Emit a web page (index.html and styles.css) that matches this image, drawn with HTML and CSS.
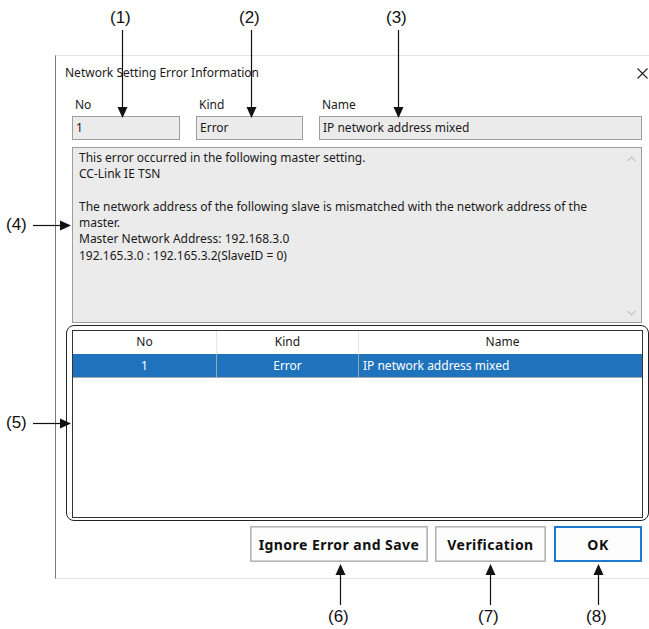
FILE: index.html
```html
<!DOCTYPE html>
<html>
<head>
<meta charset="utf-8">
<link rel="stylesheet" href="styles.css">
</head>
<body>
<div class="page">
  <div class="dialog">
    <div class="title-row">
      <span class="title">Network Setting Error Information</span>
      <svg class="close" width="11" height="11" viewBox="0 0 11 11"><path d="M0.5 0.5L10.5 10.5M10.5 0.5L0.5 10.5" stroke="#222" stroke-width="1.1" fill="none"/></svg>
    </div>
    <div class="fields">
      <div class="field">
        <div class="label">No</div>
        <div class="box">1</div>
      </div>
      <div class="field">
        <div class="label">Kind</div>
        <div class="box">Error</div>
      </div>
      <div class="field">
        <div class="label">Name</div>
        <div class="box">IP network address mixed</div>
      </div>
    </div>
    <div class="detail">
      <div class="detail-text">
        <div>This error occurred in the following master setting.</div>
        <div>CC-Link IE TSN</div>
        <div class="blank"></div>
        <div>The network address of the following slave is mismatched with the network address of the master.</div>
        <div>Master Network Address: 192.168.3.0</div>
        <div>192.165.3.0 : 192.165.3.2(SlaveID = 0)</div>
      </div>
      <div class="scrollbar">
        <svg width="9" height="6" viewBox="0 0 9 6"><path d="M0.5 5L4.5 1L8.5 5" stroke="#c4c4c4" stroke-width="1.2" fill="none"/></svg>
        <svg width="9" height="6" viewBox="0 0 9 6"><path d="M0.5 1L4.5 5L8.5 1" stroke="#c4c4c4" stroke-width="1.2" fill="none"/></svg>
      </div>
    </div>
    <div class="list-frame">
      <div class="list">
        <div class="row head">
          <div class="c1">No</div>
          <div class="c2">Kind</div>
          <div class="c3 center">Name</div>
        </div>
        <div class="row sel">
          <div class="c1">1</div>
          <div class="c2">Error</div>
          <div class="c3">IP network address mixed</div>
        </div>
      </div>
    </div>
    <div class="buttons">
      <div class="btn wide">Ignore Error and Save</div>
      <div class="btn mid">Verification</div>
      <div class="btn ok">OK</div>
    </div>
  </div>

  <svg class="arrows" width="649" height="629" viewBox="0 0 649 629">
    <g stroke="#111" stroke-width="1.2" fill="none">
      <line x1="122.5" y1="30" x2="122.5" y2="108"/>
      <line x1="251.5" y1="30" x2="251.5" y2="108"/>
      <line x1="398.5" y1="30" x2="398.5" y2="108"/>
      <line x1="33" y1="225.5" x2="62" y2="225.5"/>
      <line x1="33" y1="423.5" x2="62" y2="423.5"/>
      <line x1="340.5" y1="572" x2="340.5" y2="605"/>
      <line x1="490.5" y1="572" x2="490.5" y2="605"/>
      <line x1="598.5" y1="572" x2="598.5" y2="605"/>
    </g>
    <g fill="#111">
      <path d="M117.5 107H127.5L122.5 118Z"/>
      <path d="M246.5 107H256.5L251.5 118Z"/>
      <path d="M393.5 107H403.5L398.5 118Z"/>
      <path d="M60 220.5V230.5L71 225.5Z"/>
      <path d="M60 418.5V428.5L71 423.5Z"/>
      <path d="M335.5 575H345.5L340.5 564Z"/>
      <path d="M485.5 575H495.5L490.5 564Z"/>
      <path d="M593.5 575H603.5L598.5 564Z"/>
    </g>
  </svg>
  <div class="callout c-1">(1)</div>
  <div class="callout c-2">(2)</div>
  <div class="callout c-3">(3)</div>
  <div class="callout c-4">(4)</div>
  <div class="callout c-5">(5)</div>
  <div class="callout c-6">(6)</div>
  <div class="callout c-7">(7)</div>
  <div class="callout c-8">(8)</div>
</div>
</body>
</html>
```
FILE: styles.css
```css
html, body {
  margin: 0;
  padding: 0;
  background: #ffffff;
}
.page {
  position: relative;
  width: 649px;
  height: 629px;
  overflow: hidden;
  padding-top: 55px;
  box-sizing: border-box;
}
.dialog {
  margin-left: 55px;
  width: 600px;
  height: 524px;
  box-sizing: border-box;
  border-left: 1px solid #7a7a7a;
  border-top: 1px solid #e3e3e3;
  border-bottom: 1px solid #e3e3e3;
  padding: 0 0 0 16px;
  font-family: "Noto Sans", sans-serif;
  font-size: 12px;
  color: #1a1a1a;
  display: flex;
  flex-direction: column;
}
.title-row {
  height: 33px;
  display: flex;
  align-items: center;
  margin-left: -7px;
  width: 584px;
  justify-content: space-between;
  padding-top: 1px;
  box-sizing: border-box;
}
.title {
  line-height: 16px;
}
.close {
  margin-right: 1px;
}
.fields {
  display: grid;
  grid-template-columns: 108px 107px 323px;
  column-gap: 16px;
}
.label {
  height: 27px;
  line-height: 16px;
  padding: 8px 0 0 3px;
  box-sizing: border-box;
}
.box {
  height: 24px;
  box-sizing: border-box;
  border: 1px solid #9d9d9d;
  background: #ebebeb;
  line-height: 22px;
  padding-left: 3px;
}
.detail {
  margin-top: 7px;
  width: 570px;
  height: 176px;
  box-sizing: border-box;
  border: 1px solid #9d9d9d;
  background: #ebebeb;
  display: flex;
}
.detail-text {
  flex: 1;
  padding: 2px 0 0 6px;
  line-height: 16.3px;
  padding-right: 30px;
}
.blank {
  height: 16.3px;
}
.scrollbar {
  width: 20px;
  display: flex;
  flex-direction: column;
  justify-content: space-between;
  align-items: center;
  padding: 8px 0 6px;
}
.list-frame {
  margin-top: 2px;
  margin-left: -6px;
  width: 583px;
  height: 196px;
  box-sizing: border-box;
  border: 1px solid #222;
  border-radius: 8px;
  padding: 4px 5px 2px 5px;
}
.list {
  height: 100%;
  box-sizing: border-box;
  border: 1.5px solid #333;
  background: #fff;
}
.row {
  display: grid;
  grid-template-columns: 144px 142px 1fr;
}
.row > div {
  text-align: center;
}
.row .c3 {
  text-align: left;
  padding-left: 4px;
}
.row .c3.center {
  text-align: center;
}
.head {
  height: 23px;
  line-height: 22px;
}
.head > div {
  border-right: 1px solid #e5e5e5;
}
.head > div:last-child {
  border-right: none;
}
.sel {
  height: 24px;
  line-height: 23px;
  background: #1f72bc;
  color: #ffffff;
  border-bottom: 1px solid #a8a8a8;
  box-sizing: border-box;
}
.sel > div {
  border-right: 1px solid #9aa4ad;
}
.sel > div:last-child {
  border-right: none;
}
.buttons {
  display: flex;
  justify-content: flex-end;
  gap: 7px;
  width: 570px;
  margin-top: 5px;
}
.btn {
  height: 36px;
  box-sizing: border-box;
  border: 2px solid #cfcfcf;
  outline: 1px solid #b5b5b5;
  outline-offset: -1px;
  background: #fdfdfd;
  font-weight: bold;
  font-size: 14px;
  letter-spacing: 0.45px;
  display: flex;
  align-items: center;
  justify-content: center;
  color: #111;
}
.btn.wide { width: 178px; }
.btn.mid { width: 111px; margin-right: 1px; }
.btn.ok {
  width: 88px;
  border: 2px solid #1f78d1;
  outline: none;
}
.arrows {
  position: absolute;
  left: 0;
  top: 0;
}
.callout {
  position: absolute;
  font-family: "Liberation Sans", Arial, sans-serif;
  font-size: 17px;
  line-height: 20px;
  color: #111;
}
.c-1 { left: 110px; top: 8px; }
.c-2 { left: 239px; top: 8px; }
.c-3 { left: 386px; top: 8px; }
.c-4 { left: 6px; top: 215px; }
.c-5 { left: 6px; top: 413px; }
.c-6 { left: 328px; top: 607px; }
.c-7 { left: 478px; top: 607px; }
.c-8 { left: 586px; top: 607px; }
```
